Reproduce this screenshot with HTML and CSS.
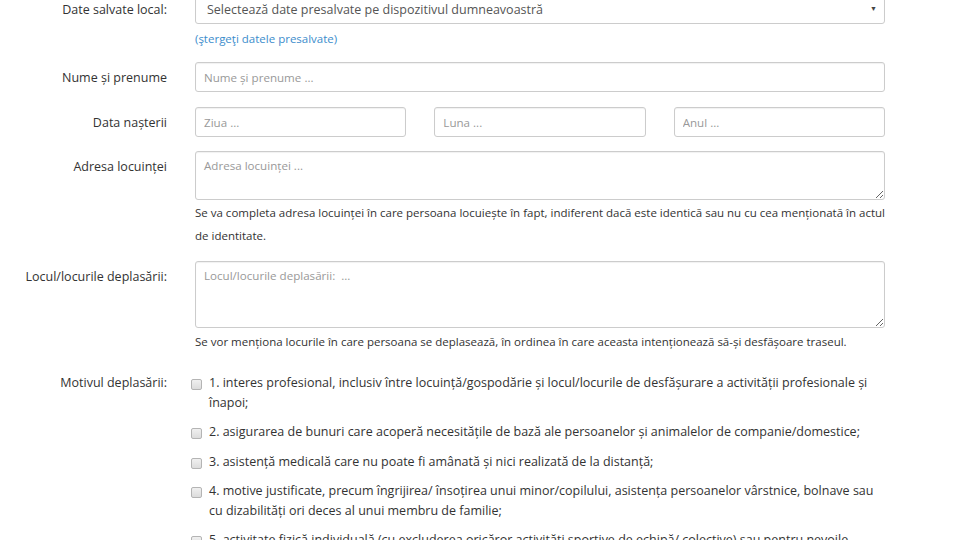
FILE: index.html
```html
<!DOCTYPE html>
<html>
<head>
  <title>Declarație pe propria răspundere</title>
  <link rel="stylesheet" href="styles.css">
</head>
<body>
  <form class="form-horizontal">
    <div class="form-group first">
      <label class="control-label">Date salvate local:</label>
      <div class="field">
        <div class="select-wrap">
          <select class="form-control">
            <option>Selectează date presalvate pe dispozitivul dumneavoastră</option>
          </select>
          <span class="caret">&#9660;</span>
        </div>
        <a class="clear-link" href="#">(ştergeţi datele presalvate)</a>
      </div>
    </div>

    <div class="form-group">
      <label class="control-label">Nume și prenume</label>
      <div class="field">
        <input class="form-control" type="text" placeholder="Nume și prenume ...">
      </div>
    </div>

    <div class="form-group tight">
      <label class="control-label">Data nașterii</label>
      <div class="field date-row">
        <input class="form-control" type="text" placeholder="Ziua ...">
        <input class="form-control" type="text" placeholder="Luna ...">
        <input class="form-control" type="text" placeholder="Anul ...">
      </div>
    </div>

    <div class="form-group tight">
      <label class="control-label">Adresa locuinței</label>
      <div class="field">
        <textarea class="form-control address" placeholder="Adresa locuinței ..."></textarea>
        <p class="help-block">Se va completa adresa locuinței în care persoana locuiește în fapt, indiferent dacă este identică sau nu cu cea menționată în actul de identitate.</p>
      </div>
    </div>

    <div class="form-group">
      <label class="control-label">Locul/locurile deplasării:</label>
      <div class="field">
        <textarea class="form-control places" placeholder="Locul/locurile deplasării:  ..."></textarea>
        <p class="help-block single">Se vor menționa locurile în care persoana se deplasează, în ordinea în care aceasta intenționează să-și desfășoare traseul.</p>
      </div>
    </div>

    <div class="form-group reasons">
      <label class="control-label line">Motivul deplasării:</label>
      <div class="field">
        <label class="checkbox"><input type="checkbox"><span>1. interes profesional, inclusiv între locuință/gospodărie și locul/locurile de desfășurare a activității profesionale și înapoi;</span></label>
        <label class="checkbox"><input type="checkbox"><span>2. asigurarea de bunuri care acoperă necesitățile de bază ale persoanelor și animalelor de companie/domestice;</span></label>
        <label class="checkbox"><input type="checkbox"><span>3. asistență medicală care nu poate fi amânată și nici realizată de la distanță;</span></label>
        <label class="checkbox"><input type="checkbox"><span>4. motive justificate, precum îngrijirea/ însoțirea unui minor/copilului, asistența persoanelor vârstnice, bolnave sau cu dizabilități ori deces al unui membru de familie;</span></label>
        <label class="checkbox"><input type="checkbox"><span>5. activitate fizică individuală (cu excluderea oricăror activități sportive de echipă/ colective) sau pentru nevoile animalelor de companie/domestice, în apropierea locuinței;</span></label>
      </div>
    </div>
  </form>
</body>
</html>
```

FILE: styles.css
```css
body {
  margin: 0;
  font-family: "Open Sans", "Noto Sans", sans-serif;
  font-size: 12.5px;
  color: #333;
  background-color: #fff;
}
.form-horizontal {
  width: 885px;
}
.form-group {
  display: flex;
  margin-bottom: 15px;
}
.form-group.first {
  margin-top: -6px;
}
.form-group.tight {
  margin-bottom: 14px;
}
.control-label {
  width: 167px;
  flex-shrink: 0;
  margin-right: 28px;
  text-align: right;
  line-height: 19px;
  padding-top: 6px;
}
.control-label.line {
  padding-top: 0;
  line-height: 19.5px;
}
.field {
  flex: 1;
  min-width: 0;
}
.form-control {
  display: block;
  box-sizing: border-box;
  width: 100%;
  height: 30px;
  padding: 4px 8px;
  font-family: inherit;
  font-size: 11.6px;
  color: #555;
  background-color: #fff;
  border: 1px solid #ccc;
  border-radius: 3px;
  box-shadow: inset 0 1px 1px rgba(0, 0, 0, 0.06);
}
.form-control::placeholder {
  color: #999;
}
.select-wrap {
  position: relative;
}
select.form-control {
  appearance: none;
  -webkit-appearance: none;
  padding-left: 11px;
  font-size: 12.5px;
  color: #555;
}
.caret {
  position: absolute;
  right: 8px;
  top: 10px;
  font-size: 7px;
  color: #444;
  pointer-events: none;
}
.clear-link {
  display: block;
  margin-top: 6px;
  font-size: 11.5px;
  line-height: 17px;
  color: #3c8dcc;
  text-decoration: none;
}
.date-row {
  display: flex;
  gap: 28px;
}
.date-row .form-control {
  flex: 1;
  min-width: 0;
}
textarea.form-control {
  resize: vertical;
  padding-top: 5px;
  line-height: 17px;
}
.address {
  height: 49px;
}
.places {
  height: 67px;
}
.help-block {
  margin: 1px 0 0;
  font-size: 11.5px;
  line-height: 23px;
  color: #333;
}
.help-block.single {
  margin-top: 2px;
}
.form-group.reasons {
  margin-top: 20px;
}
.checkbox {
  display: flex;
  align-items: flex-start;
  line-height: 19.5px;
  margin-bottom: 10px;
}
.checkbox input {
  appearance: none;
  -webkit-appearance: none;
  flex-shrink: 0;
  width: 11px;
  height: 11px;
  margin: 6px 7px 0 -4px;
  border: 1px solid #b4b4b4;
  border-radius: 2px;
  background: linear-gradient(#f0f0f0, #dcdcdc);
}
```
